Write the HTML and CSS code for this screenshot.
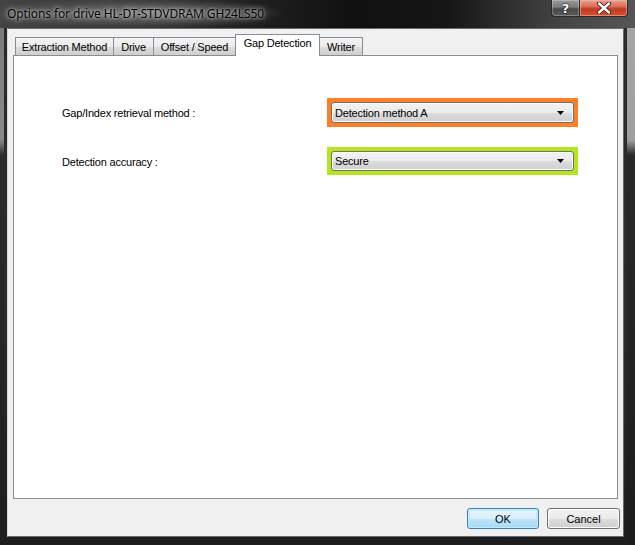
FILE: index.html
```html
<!DOCTYPE html>
<html>
<head>
<meta charset="utf-8">
<link rel="stylesheet" href="styles.css">
</head>
<body>
<div class="window">
  <div class="titlebar">
    <span class="title">Options for drive HL-DT-STDVDRAM GH24LS50</span>
    <div class="caption-btns">
      <div class="cap help">?</div>
      <div class="cap close">
        <svg width="16" height="12" viewBox="0 0 16 12">
          <path d="M3 1.5 L13 10.5 M13 1.5 L3 10.5" stroke="#3a1a12" stroke-width="4.2" stroke-linecap="round"/>
          <path d="M3 1.5 L13 10.5 M13 1.5 L3 10.5" stroke="#ffffff" stroke-width="2.4" stroke-linecap="round"/>
        </svg>
      </div>
    </div>
  </div>
  <div class="client">
    <div class="tabs">
      <div class="tab t1">Extraction Method</div>
      <div class="tab t2">Drive</div>
      <div class="tab t3">Offset / Speed</div>
      <div class="tab t4 selected">Gap Detection</div>
      <div class="tab t5">Writer</div>
    </div>
    <div class="panel">
      <div class="form">
        <div class="label">Gap/Index retrieval method :</div>
        <div class="hl orange">
          <div class="combo"><span>Detection method A</span>
            <svg class="arrow" width="7" height="4" viewBox="0 0 7 4"><path d="M0 0 H7 L3.5 4 Z" fill="#000"/></svg>
          </div>
        </div>
        <div class="label">Detection accuracy :</div>
        <div class="hl green">
          <div class="combo"><span>Secure</span>
            <svg class="arrow" width="7" height="4" viewBox="0 0 7 4"><path d="M0 0 H7 L3.5 4 Z" fill="#000"/></svg>
          </div>
        </div>
      </div>
    </div>
    <div class="buttons">
      <button class="btn default">OK</button>
      <button class="btn">Cancel</button>
    </div>
  </div>
</div>
</body>
</html>
```
FILE: styles.css
```css
html, body {
  margin: 0;
  padding: 0;
  background: #1a1a1a;
}
body {
  width: 635px;
  height: 545px;
  overflow: hidden;
}
.window {
  width: 635px;
  height: 545px;
  display: flex;
  flex-direction: column;
  background:
    linear-gradient(to bottom, #a6a6a6 0px, #a0a0a0 140px, #2a2a2a 155px, #1c1c1c 545px) right top / 8px 100% no-repeat,
    linear-gradient(to bottom, #777 0px, #8a8a8a 140px, #2c2c2c 155px, #1e1e1e 545px) left top / 4px 100% no-repeat,
    linear-gradient(to bottom, #3a3a3a 0px, #2a2a2a 28px, #2c2c2c 300px, #1e1e1e 545px);
}
.titlebar {
  height: 28px;
  display: flex;
  align-items: flex-start;
  background:
    radial-gradient(ellipse 150px 16px at 135px 13px, rgba(120,120,120,0.9) 0%, rgba(90,90,90,0.6) 60%, rgba(60,60,60,0) 100%),
    linear-gradient(to right, #444 0%, #2a2a2a 30%, #111 55%, #151515 70%, #444 88%, #555 100%);
}
.title {
  font-family: "Noto Sans", "DejaVu Sans", sans-serif;
  font-size: 12px;
  color: #000;
  padding: 6px 0 0 7px;
  line-height: 16px;
  letter-spacing: -0.1px;
  text-shadow: 0 0 6px rgba(230,230,230,0.9), 0 0 3px rgba(230,230,230,0.8);
}
.caption-btns {
  margin-left: auto;
  margin-right: 7px;
  display: flex;
}
.cap {
  height: 17px;
  box-sizing: border-box;
  border: 1px solid #2a2a2a;
  border-top: none;
  display: flex;
  align-items: center;
  justify-content: center;
}
.help {
  width: 28px;
  border-radius: 0 0 0 4px;
  border-right: none;
  background: linear-gradient(to bottom, #9a9a9a 0%, #7a7a7a 45%, #4a4a4a 55%, #5a5a5a 100%);
  box-shadow: inset 0 0 0 1px rgba(255,255,255,0.25);
  font-family: "DejaVu Sans", sans-serif;
  font-weight: bold;
  font-size: 13px;
  color: #fff;
  text-shadow: 0 0 2px #000, 0 0 1px #000;
}
.close {
  width: 49px;
  border-radius: 0 0 4px 0;
  background: linear-gradient(to bottom, #e8a090 0%, #d8705a 40%, #c33a22 55%, #d4512f 100%);
  box-shadow: inset 0 0 0 1px rgba(255,200,190,0.45);
}
.client {
  margin: 0 11px 0 7px;
  width: 617px;
  height: 509px;
  box-sizing: border-box;
  background: #f0f0f0;
  border: 1px solid #d8d8d8;
  border-top-color: #6a6a6a;
  border-right-color: #6a6a6a;
  border-bottom-color: #6a6a6a;
  display: flex;
  flex-direction: column;
  font-family: "Liberation Sans", Arial, sans-serif;
  font-size: 11px;
  color: #000;
}
.tabs {
  margin-top: 5px;
  padding-left: 7px;
  height: 22px;
  display: flex;
  align-items: flex-start;
  margin-bottom: -1px;
}
.tab {
  box-sizing: border-box;
  height: 18px;
  margin-top: 3px;
  margin-left: -1px;
  border: 1px solid #898c95;
  border-bottom: none;
  background: linear-gradient(to bottom, #f3f3f3 0%, #ebebeb 50%, #dddddd 51%, #cfcfcf 100%);
  text-align: center;
  line-height: 18px;
  white-space: nowrap;
  letter-spacing: -0.2px;
}
.t1 { width: 99px; margin-left: 0; }
.t2 { width: 41px; }
.t3 { width: 83px; }
.t4 { width: 85px; }
.t5 { width: 44px; }
.tab.selected {
  position: relative;
  z-index: 1;
  height: 22px;
  margin-top: 0;
  background: #fff;
  line-height: 17px;
}
.panel {
  margin: 0 5px;
  height: 444px;
  box-sizing: border-box;
  background: #fff;
  border: 1px solid #898c95;
}
.form {
  display: grid;
  grid-template-columns: 265px 251px;
  row-gap: 20px;
  padding: 42px 0 0 48px;
  align-items: center;
}
.label {
  letter-spacing: -0.2px;
  padding-top: 1px;
}
.hl {
  box-sizing: border-box;
  height: 28px;
  padding: 4px;
}
.orange { background: #ff7f27; height: 29px; }
.green { background: #b5e61d; }
.combo {
  box-sizing: border-box;
  height: 100%;
  border: 1px solid #707070;
  border-radius: 3px;
  background: linear-gradient(to bottom, #f2f2f2 0%, #ebebeb 50%, #dddddd 51%, #cfcfcf 100%);
  box-shadow: inset 0 0 0 1px #fbfbfb;
  display: flex;
  align-items: center;
  padding: 0 9px 0 3px;
  letter-spacing: -0.2px;
}
.combo span { flex: 1; }
.arrow { display: block; }
.buttons {
  display: flex;
  justify-content: flex-end;
  gap: 8px;
  margin: 9px 3px 0 0;
}
.btn {
  box-sizing: border-box;
  height: 21px;
  margin: 0;
  padding: 0;
  font-family: "Liberation Sans", Arial, sans-serif;
  font-size: 11px;
  color: #000;
  border: 1px solid #707070;
  border-radius: 3px;
  background: linear-gradient(to bottom, #f2f2f2 0%, #ebebeb 50%, #dddddd 51%, #cfcfcf 100%);
  box-shadow: inset 0 0 0 1px #fcfcfc;
  width: 73px;
}
.btn.default {
  width: 72px;
  border-color: #3c7fb1;
  background: linear-gradient(to bottom, #eaf6fd 0%, #d9f0fc 50%, #bee6fd 51%, #a7d9f5 100%);
  box-shadow: inset 0 0 0 1px #c8ecff, inset 0 0 0 2px rgba(160,220,250,0.5);
}
```
